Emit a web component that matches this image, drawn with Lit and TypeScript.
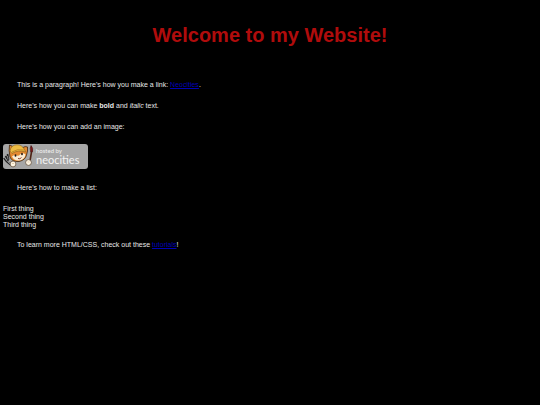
import { LitElement, html, css, svg } from "lit";
import { customElement } from "lit/decorators.js";

const cat = svg`
  <!-- fork -->
  <path d="M.8 14L3.500 17.500L8 21M4.500 10L5.500 15L4 17.500M2.500 12L5 16" stroke="#222" stroke-width="1.700" fill="none"/>
  <path d="M1.500 13.500L4.500 17.500L7 20M4.500 12L5 15.500" stroke="#c8c8c8" stroke-width=".6" fill="none"/>
  <!-- ears and face -->
  <path d="M7 13Q5.500 6 6.500 1Q9.500 2 11.500 4L20 3.500Q22 2 24.500 3Q25 7 23.500 11Q22.500 16 16 17.500Q9 18 7 13Z" fill="#e58a30" stroke="#3c2410" stroke-width=".8"/>
  <path d="M9 12.500Q11 10 14 11.500Q16 12.500 17.500 10Q20 8.500 22.500 10.500Q21.500 16 16 16.500Q11 17 9 12.500Z" fill="#f8ead2"/>
  <!-- cap -->
  <path d="M7 7Q8 .8 14 .8Q19 .8 21.500 5.500L22.500 8Q15 5.500 9 9.500Z" fill="#eebc43" stroke="#70501a" stroke-width=".5"/>
  <path d="M9 8Q14 4.500 21 6" stroke="#b47c20" stroke-width=".8" fill="none"/>
  <ellipse cx="12.500" cy="11.500" rx=".9" ry="1.300" fill="#28180c"/>
  <ellipse cx="19" cy="10" rx=".9" ry="1.300" fill="#28180c"/>
  <path d="M15 14.500Q17 15.500 18.500 13.500" stroke="#83311b" stroke-width=".9" fill="none"/>
  <!-- brush -->
  <path d="M28.500 8L27 17L26 21" stroke="#4d2416" stroke-width="1.600" fill="none"/>
  <path d="M27.700 8Q26.500 4 28 1.500Q30.500 4 29.500 8Z" fill="#7c1616" stroke="#301010" stroke-width=".5"/>
  <!-- paws -->
  <circle cx="10" cy="20" r="2.900" fill="#fff6e4" stroke="#54402c" stroke-width=".7"/>
  <circle cx="25.500" cy="18.500" r="2.900" fill="#fff6e4" stroke="#54402c" stroke-width=".7"/>
  <path d="M9 19.500h2M24.500 18h2" stroke="#d9b98c" stroke-width=".6"/>
`;

@customElement("neocities-badge")
export class NeocitiesBadge extends LitElement {
  static styles = css`
    :host { display: block; }
    .badge { display: block; width: 85px; height: 25px; }
    .words { font-family: Lato, "Open Sans", sans-serif; fill: #f2f2f2; }
    .small { font-size: 6px; }
    .large { font-size: 11px; }
  `;

  render() {
    return html`
      <svg class="badge" viewBox="0 0 85 25" role="img" aria-label="hosted by neocities">
        <rect width="85" height="25" rx="3" fill="#a6a6a6" />
        ${cat}
        <g class="words">
          <text class="small" x="33" y="9">hosted by</text>
          <text class="large" x="33" y="20">neocities</text>
        </g>
      </svg>
    `;
  }
}

@customElement("app-root")
export class AppRoot extends LitElement {
  static styles = css`
    :host {
      display: block;
      box-sizing: border-box;
      min-height: 100vh;
      padding: 23px 3px 8px;
      background: #000;
      color: #e8e8e8;
      font: 7px/8px "Liberation Sans", Arial, sans-serif;
    }
    .title {
      margin: 0 0 34px;
      color: #b00c0c;
      font-size: 20px;
      line-height: 24px;
      text-align: center;
    }
    .para { margin: 0 0 13px; padding-left: 14px; }
    .logo { margin-bottom: 15px; }
    .list { margin: 0 0 12px; padding: 0; list-style: none; }
    .link { color: #0000b8; }
  `;

  render() {
    return html`
      <h1 class="title">Welcome to my Website!</h1>
      <p class="para">This is a paragraph! Here's how you make a link: <a class="link" href="https://neocities.org">Neocities</a>.</p>
      <p class="para">Here's how you can make <strong>bold</strong> and <em>italic</em> text.</p>
      <p class="para">Here's how you can add an image:</p>
      <neocities-badge class="logo"></neocities-badge>
      <p class="para">Here's how to make a list:</p>
      <ul class="list">
        <li>First thing</li>
        <li>Second thing</li>
        <li>Third thing</li>
      </ul>
      <p class="para">To learn more HTML/CSS, check out these <a class="link" href="https://neocities.org/tutorials">tutorials</a>!</p>
    `;
  }
}
